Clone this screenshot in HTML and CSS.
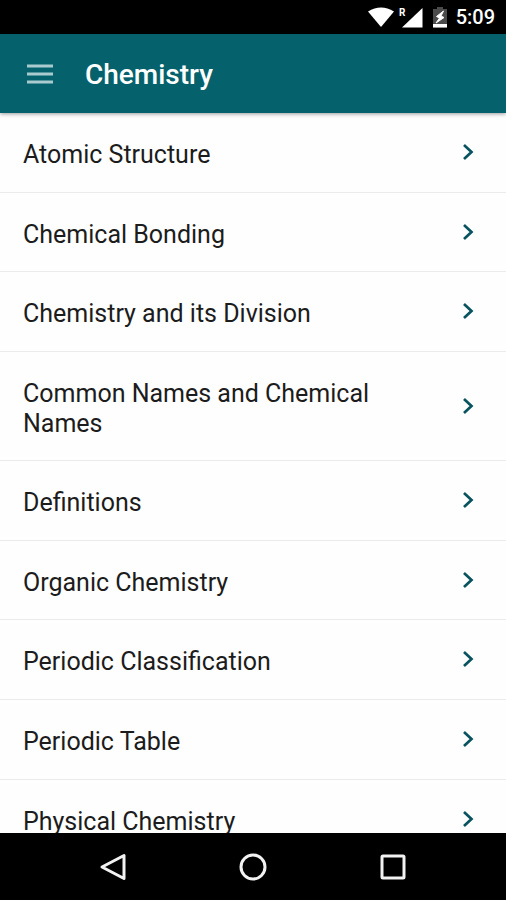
FILE: index.html
```html
<!DOCTYPE html>
<html lang="en">
<head>
<meta charset="utf-8">
<meta name="viewport" content="width=device-width, initial-scale=1">
<title>Chemistry</title>
<link rel="stylesheet" href="styles.css">
</head>
<body>
<svg class="defs" aria-hidden="true">
  <symbol id="chevron" viewBox="0 0 12 18"><path d="M2 2l7.500 7L2 16" fill="none" stroke="currentColor" stroke-width="2.700"/></symbol>
</svg>
<div class="status">
  <svg width="82" height="24" viewBox="0 0 82 24" aria-hidden="true">
    <path d="M0 6.500Q13 -1.500 26 6.500L13 22z" fill="#fff"/>
    <text x="31" y="11" class="roaming">R</text>
    <path d="M54.500 3v19.500H34z" fill="#fff"/>
    <path d="M69 2h6v2h4v18.500H65V4h4z" fill="#4b4b4b"/>
    <path d="M65 19h14v3.500H65z" fill="#fff"/>
    <path d="M75.500 6l-7 5.500 3 1.500-3.500 5 8-5.500-3-1.500z" fill="#fff" stroke="#fff"/>
  </svg>
  <time>5:09</time>
</div>
<header class="bar">
  <button class="menu" aria-label="Menu"><svg width="28" height="20" viewBox="0 0 28 20"><path d="M1 2h26M1 10h26M1 18h26" stroke="#a9cace" stroke-width="3"/></svg></button>
  <h1>Chemistry</h1>
</header>
<main class="content">
  <ul class="list">
    <li><a href="#">Atomic Structure<svg class="chevron"><use href="#chevron"/></svg></a></li>
    <li><a href="#">Chemical Bonding<svg class="chevron"><use href="#chevron"/></svg></a></li>
    <li><a href="#">Chemistry and its Division<svg class="chevron"><use href="#chevron"/></svg></a></li>
    <li><a href="#">Common Names and Chemical Names<svg class="chevron"><use href="#chevron"/></svg></a></li>
    <li><a href="#">Definitions<svg class="chevron"><use href="#chevron"/></svg></a></li>
    <li><a href="#">Organic Chemistry<svg class="chevron"><use href="#chevron"/></svg></a></li>
    <li><a href="#">Periodic Classification<svg class="chevron"><use href="#chevron"/></svg></a></li>
    <li><a href="#">Periodic Table<svg class="chevron"><use href="#chevron"/></svg></a></li>
    <li><a href="#">Physical Chemistry<svg class="chevron"><use href="#chevron"/></svg></a></li>
  </ul>
</main>
<nav class="system">
  <button aria-label="Back"><svg width="28" height="28" viewBox="0 0 28 28"><path d="M25 2.500v23L3 14z"/></svg></button>
  <button aria-label="Home"><svg width="28" height="28" viewBox="0 0 28 28"><circle cx="14" cy="14" r="12"/></svg></button>
  <button aria-label="Recent apps"><svg width="28" height="28" viewBox="0 0 28 28"><rect x="3" y="3" width="22" height="22" rx="1"/></svg></button>
</nav>
</body>
</html>
```
FILE: styles.css
```css
* {
  box-sizing: border-box;
}

body {
  margin: 0;
  height: 100vh;
  display: flex;
  flex-direction: column;
  overflow: hidden;
  background: #fefefe;
  color: #1c1c1c;
  font-family: Roboto, "Liberation Sans", sans-serif;
}

button {
  display: flex;
  padding: 0;
  border: 0;
  background: none;
}

.defs {
  position: absolute;
  width: 0;
  height: 0;
}

.status {
  flex: none;
  height: 34px;
  padding-right: 11px;
  display: flex;
  align-items: center;
  justify-content: flex-end;
  gap: 6px;
  background: #000;
  color: #fff;
  font-size: 20px;
  font-weight: 500;
}

.roaming {
  fill: #fff;
  font-size: 10px;
  font-weight: 700;
}

.bar {
  flex: none;
  position: relative;
  height: 79px;
  padding: 0 26px;
  display: flex;
  align-items: center;
  gap: 31px;
  background: #05626c;
  box-shadow: 0 1px 4px rgba(0, 0, 0, 0.4);
}

.bar h1 {
  margin: 0;
  padding-top: 2px;
  color: #fff;
  font-size: 28px;
  line-height: 32px;
  font-weight: 500;
}

.content {
  flex: 1;
  min-height: 0;
  overflow: hidden;
}

/* The last row runs on below the fold; rows share the spare height. */
.list {
  height: calc(100% + 26px);
  margin: 0;
  padding: 0;
  display: flex;
  flex-direction: column;
  list-style: none;
}

.list li {
  flex: 1 0 auto;
  border-bottom: 1px solid #ebebeb;
}

.list a {
  display: flex;
  align-items: center;
  justify-content: space-between;
  gap: 24px;
  padding: 27px 32px 21px 23px;
  color: inherit;
  font-size: 25px;
  line-height: 30px;
  text-decoration: none;
}

.chevron {
  flex: none;
  width: 12px;
  height: 18px;
  margin-bottom: 6px;
  color: #07535f;
}

.system {
  flex: none;
  height: 67px;
  padding: 0 43px;
  display: grid;
  grid-template-columns: repeat(3, 1fr);
  place-items: center;
  background: #000;
}

.system svg {
  fill: none;
  stroke: #f2f2f2;
  stroke-width: 3;
  stroke-linejoin: round;
}
```
